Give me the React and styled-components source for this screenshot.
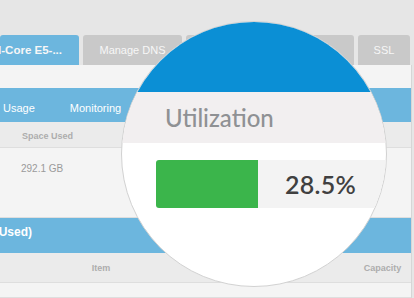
import React from 'react';
import styled, { createGlobalStyle } from 'styled-components';

const GlobalStyle = createGlobalStyle`
  html, body {
    margin: 0;
    padding: 0;
    background: #e6e6e6;
  }
  body {
    font-family: 'Liberation Sans', Arial, sans-serif;
  }
`;

const Frame = styled.div`
  position: relative;
  width: 414px;
  height: 298px;
  overflow: hidden;
  background: #e6e6e6;
`;

const TabBar = styled.nav`
  display: flex;
  gap: 4px;
  padding-top: 35px;
`;

const Tab = styled.div`
  flex: 0 0 ${props => props.$width}px;
  height: 30px;
  box-sizing: border-box;
  display: flex;
  align-items: center;
  justify-content: ${props => (props.$active ? 'flex-end' : 'center')};
  padding-right: ${props => (props.$active ? '17px' : '0')};
  overflow: hidden;
  white-space: nowrap;
  border-radius: 3px 3px 0 0;
  background: ${props => (props.$active ? '#6cb6de' : '#c9c9c9')};
  color: #f7f7f7;
  font-size: ${props => (props.$active ? '11.5px' : '11px')};
  font-weight: ${props => (props.$active ? 700 : 400)};
`;

const Panel = styled.section`
  width: 412px;
  box-sizing: border-box;
  padding-top: 23px;
  border-right: 1px solid #d6d6d6;
  background: #f4f4f4;
`;

const SubNav = styled.div`
  height: 34px;
  box-sizing: border-box;
  display: flex;
  align-items: center;
  gap: 35px;
  padding: 5px 0 0 3px;
  background: #6cb6de;
  color: #fff;
  font-size: 11px;
`;

const HeadRow = styled.div`
  height: ${props => props.$height}px;
  box-sizing: border-box;
  display: grid;
  grid-template-columns: ${props => props.$cols};
  align-items: center;
  padding-top: ${props => props.$top || 0}px;
  background: #ebebeb;
  border-bottom: 1px solid #dedede;
  color: #adadad;
  font-size: 9px;
  font-weight: 700;
`;

const HeadCell = styled.div`
  text-align: ${props => props.$align || 'center'};
  padding-left: ${props => props.$indent || 0}px;
`;

const DataRow = styled.div`
  height: ${props => props.$height}px;
  box-sizing: border-box;
  padding: ${props => props.$top || 0}px 0 0 21px;
  border-bottom: 1px solid #dedede;
  color: #9a9a9a;
  font-size: 10px;
`;

const SectionBar = styled.div`
  height: 35px;
  box-sizing: border-box;
  padding-top: 7px;
  overflow: hidden;
  white-space: nowrap;
  background: #6cb6de;
  color: #fff;
  font-size: 12px;
  font-weight: 700;
`;

const SectionTitle = styled.span`
  display: inline-block;
  margin-left: -44px;
`;

const Lens = styled.div`
  position: absolute;
  left: 121px;
  top: 21px;
  width: 266px;
  height: 266px;
  box-sizing: border-box;
  display: flex;
  flex-direction: column;
  overflow: hidden;
  border: 1px solid #d2d2d2;
  border-radius: 50%;
  background: #fff;
  font-family: Lato, 'Open Sans', sans-serif;
`;

const LensCap = styled.div`
  flex: 0 0 70px;
  background: #0b8fd5;
`;

const LensTitle = styled.div`
  flex: 0 0 51px;
  box-sizing: border-box;
  padding: 12px 0 0 43px;
  background: #f2eff0;
  color: #8f9194;
  font-size: 24px;
  font-weight: 500;
  line-height: 1.2;
`;

const Meter = styled.div`
  flex: 0 0 48px;
  display: flex;
  margin-top: 17px;
  padding-left: 34px;
`;

const MeterFill = styled.div`
  flex: 0 0 ${props => props.$width}px;
  border-radius: 3px 0 0 3px;
  background: #3bb54b;
`;

const MeterValue = styled.div`
  flex: 1;
  box-sizing: border-box;
  padding: 9px 0 0 27px;
  background: #f3f3f3;
  color: #404040;
  font-size: 25px;
  font-weight: 600;
  line-height: 1.2;
  letter-spacing: 0.3px;
`;

const tabs = [
  { label: 'Quad-Core E5-...', width: 79, active: true },
  { label: 'Manage DNS', width: 99 },
  { label: 'Backups', width: 83 },
  { label: 'Firewall', width: 81 },
  { label: 'SSL', width: 52 }
];

const App = () => (
  <Frame>
    <GlobalStyle />
    <TabBar>
      {tabs.map(tab => (
        <Tab key={tab.label} $width={tab.width} $active={tab.active}>
          {tab.label}
        </Tab>
      ))}
    </TabBar>
    <Panel>
      <SubNav>
        <span>Usage</span>
        <span>Monitoring</span>
      </SubNav>
      <HeadRow $height={26} $top={2} $cols="1fr">
        <HeadCell $align="left" $indent={22}>Space Used</HeadCell>
      </HeadRow>
      <DataRow $height={70} $top={15}>292.1 GB</DataRow>
      <SectionBar>
        <SectionTitle>(Space Used)</SectionTitle>
      </SectionBar>
      <HeadRow $height={30} $cols="202px 1fr 57px">
        <HeadCell>Item</HeadCell>
        <HeadCell />
        <HeadCell>Capacity</HeadCell>
      </HeadRow>
      <DataRow $height={15} />
    </Panel>
    <Lens>
      <LensCap />
      <LensTitle>Utilization</LensTitle>
      <Meter>
        <MeterFill $width={102} />
        <MeterValue>28.5%</MeterValue>
      </Meter>
    </Lens>
  </Frame>
);

export default App;
